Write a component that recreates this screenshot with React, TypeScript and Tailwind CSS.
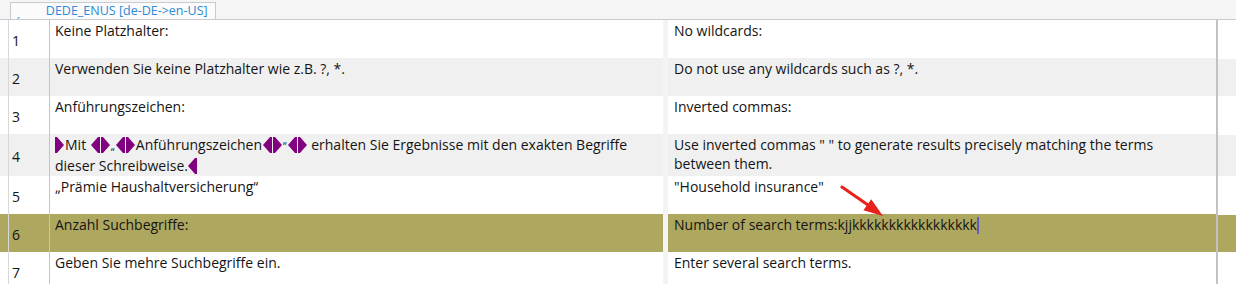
import React from "react";

const OLIVE = "bg-[#aea75f]";

function StartTag() {
  return (
    <svg width="9" height="16" viewBox="0 0 9 16" className="inline-block align-[-3px]">
      <polygon points="0,0 2,0 9,8 2,16 0,16" fill="#800080" />
    </svg>
  );
}
function EndTag() {
  return (
    <svg width="9" height="16" viewBox="0 0 9 16" className="inline-block align-[-3px]">
      <polygon points="9,0 7,0 0,8 7,16 9,16" fill="#800080" />
    </svg>
  );
}
function Pair() {
  return (
    <span className="inline-flex gap-[1px] mx-[1px] align-[-3px]">
      <EndTag />
      <StartTag />
    </span>
  );
}

type Row = {
  n: number;
  h: string;
  bg: string;
  src: React.ReactNode;
  tgt: React.ReactNode;
};

const rows: Row[] = [
  { n: 1, h: "h-[38px]", bg: "bg-white", src: "Keine Platzhalter:", tgt: "No wildcards:" },
  {
    n: 2,
    h: "h-[38px]",
    bg: "bg-[#f0f0f0]",
    src: "Verwenden Sie keine Platzhalter wie z.B. ?, *.",
    tgt: "Do not use any wildcards such as ?, *.",
  },
  { n: 3, h: "h-[38px]", bg: "bg-white", src: "Anführungszeichen:", tgt: "Inverted commas:" },
  {
    n: 4,
    h: "h-[42px]",
    bg: "bg-[#f0f0f0]",
    src: (
      <>
        <StartTag />
        <span className="ml-[1px]">Mit </span>
        <Pair />
        <span className="text-[10px]">„</span>
        <Pair />
        Anführungszeichen
        <Pair />
        <span className="text-[10px]">“</span>
        <Pair /> erhalten Sie Ergebnisse mit den exakten Begriffe
        <br />
        dieser Schreibweise.
        <EndTag />
      </>
    ),
    tgt: (
      <>
        Use inverted commas " " to generate results precisely matching the terms
        <br />
        between them.
      </>
    ),
  },
  {
    n: 5,
    h: "h-[38px]",
    bg: "bg-white",
    src: "„Prämie Haushaltversicherung“",
    tgt: '"Household insurance"',
  },
  {
    n: 6,
    h: "h-[38px]",
    bg: OLIVE,
    src: "Anzahl Suchbegriffe:",
    tgt: (
      <>
        Number of search terms:kjjkkkkkkkkkkkkkkkkk
        <span className="inline-block w-[2px] h-[17px] bg-[#5c5cc4] align-[-4px]" />
      </>
    ),
  },
  {
    n: 7,
    h: "h-[38px]",
    bg: "bg-white",
    src: "Geben Sie mehre Suchbegriffe ein.",
    tgt: "Enter several search terms.",
  },
];

export default function App() {
  return (
    <div
      className="relative w-[1236px] h-[284px] overflow-hidden bg-white text-[#141414]"
      style={{ fontFamily: '"Open Sans", "Noto Sans", sans-serif' }}
    >
      {/* header with tab */}
      <div className="h-[20px] bg-[#f5f5f5] border-b border-[#c6ccd2] flex items-end pl-[10px]">
        <div className="h-[17px] w-[206px] bg-[#fbfbfb] border-l border-t border-r border-[#c6ccd2] flex items-center text-[#2d8ad8] text-[12.5px] leading-none">
          <span className="pl-[6px] pt-[4px] text-[10px]">ˏ</span>
          <span className="pl-[26px]">DEDE_ENUS [de-DE-&gt;en-US]</span>
        </div>
      </div>

      {rows.map((r) => (
        <div key={r.n} className={`flex ${r.h} ${r.bg} text-[14px] leading-[19px]`}>
          <div className="w-[9px] shrink-0 border-r border-[#d8d8d8]" />
          <div className="w-[41px] shrink-0 border-r border-[#c4c4c4] flex items-center pl-[3px] pt-[2px]">
            {r.n}
          </div>
          <div className="w-[613px] shrink-0 pl-[5px] pt-[1px] whitespace-nowrap">{r.src}</div>
          <div className="w-[5px] shrink-0 bg-[#f4f4f4]" />
          <div className="w-[550px] shrink-0 pl-[6px] pt-[1px] whitespace-nowrap border-r-2 border-[#c2c2c2]">
            {r.tgt}
          </div>
          <div className="flex-1 pt-[1px] bg-white">
            <div className={`h-full ${r.bg}`} />
          </div>
        </div>
      ))}

      {/* red arrow annotation */}
      <svg
        className="absolute left-[835px] top-[180px]"
        width="50"
        height="40"
        viewBox="0 0 50 40"
      >
        <line x1="7" y1="7" x2="33" y2="25" stroke="#e8211c" strokeWidth="3" strokeLinecap="round" />
        <polygon points="48,36 28.4,30.2 36.2,19.2" fill="#e8211c" />
      </svg>
    </div>
  );
}
